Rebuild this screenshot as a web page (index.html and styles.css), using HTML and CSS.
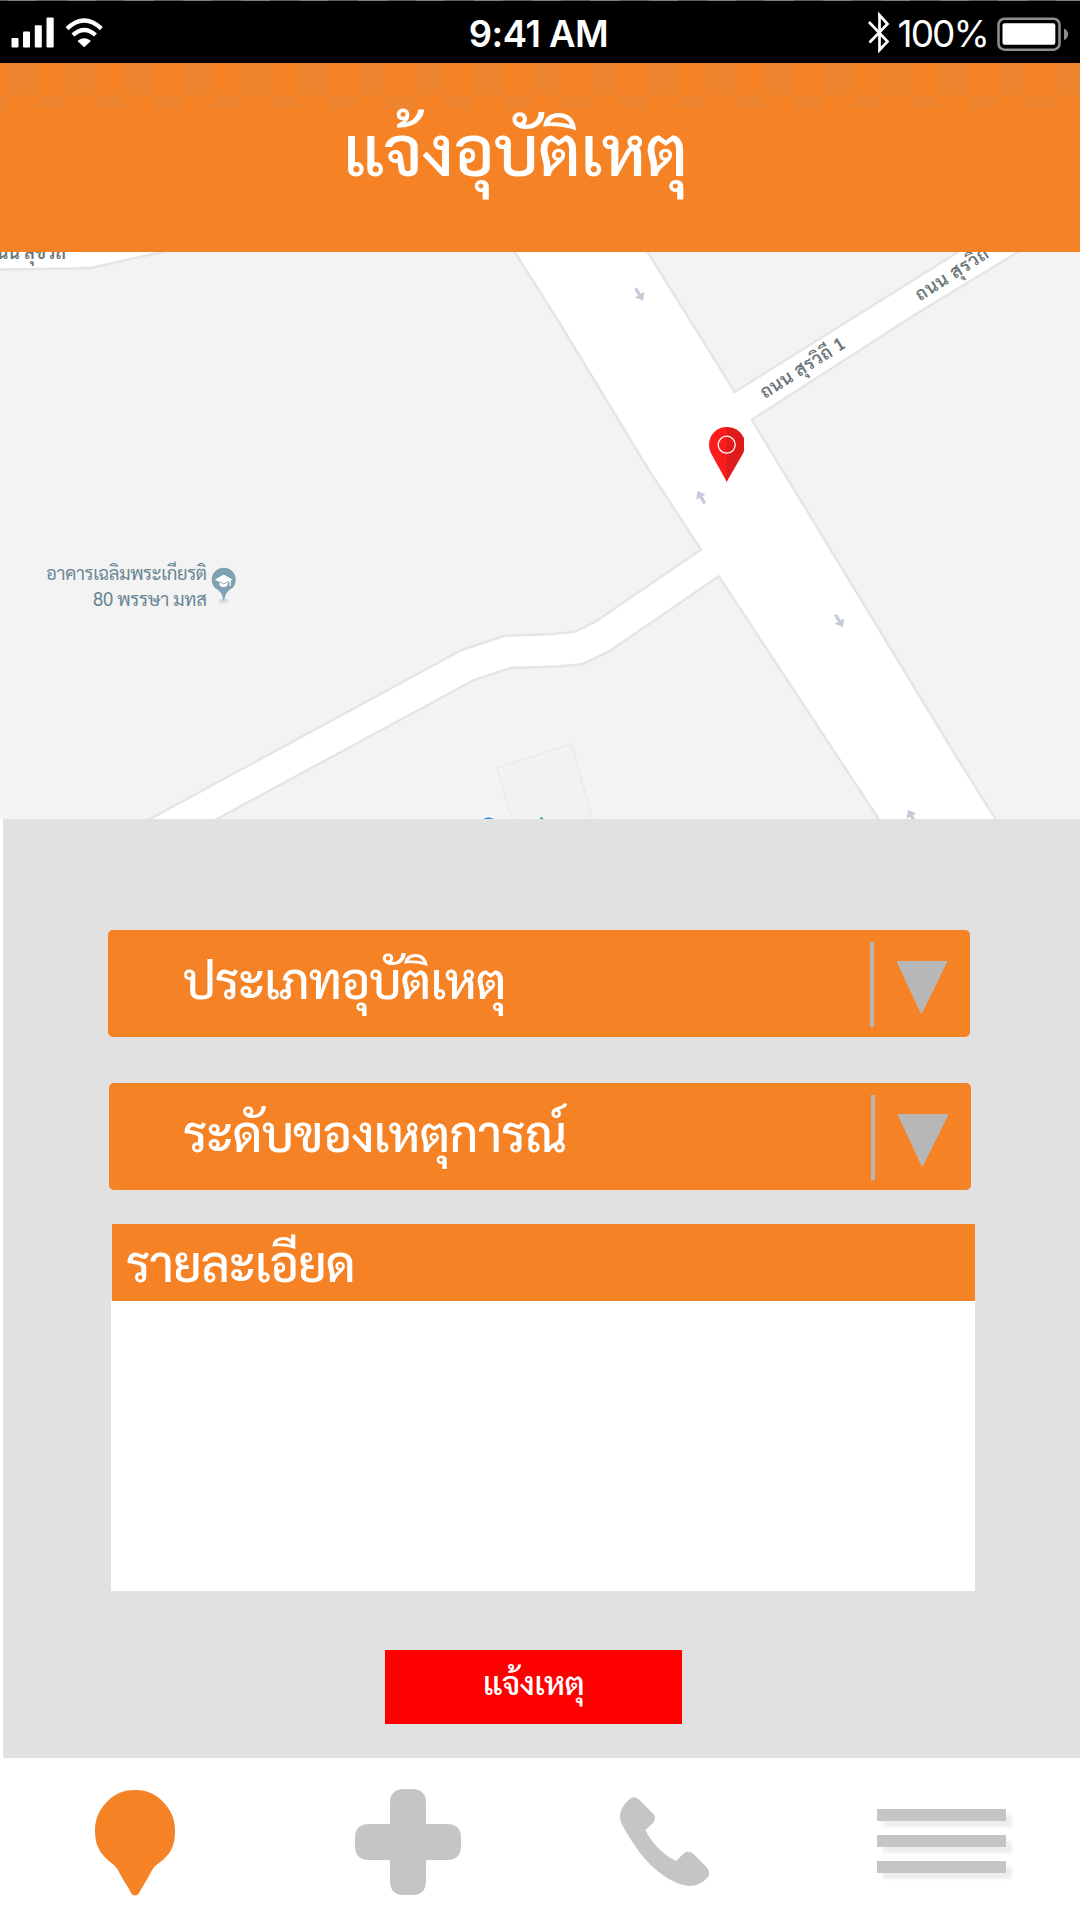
FILE: index.html
```html
<!DOCTYPE html>
<html lang="th">
<head>
<meta charset="utf-8">
<title>แจ้งอุบัติเหตุ</title>
<link rel="stylesheet" href="styles.css">
</head>
<body>
<div class="screen">
  <div class="status">
    <svg class="signal" viewBox="0 0 96 32" width="96" height="32">
      <g fill="#fff">
        <rect x="0.5" y="21" width="7" height="9.5" rx="1"/>
        <rect x="12" y="14.5" width="7" height="16" rx="1"/>
        <rect x="23.8" y="8.3" width="7" height="22.2" rx="1"/>
        <rect x="35.5" y="0.5" width="7.2" height="30" rx="1"/>
        <path d="M73.2 30.2 L67 24.4 Q66.700 23.800 67.300 23.300 Q73.200 19 79.100 23.300 Q79.700 23.800 79.400 24.400 Z"/>
      </g>
      <g fill="none" stroke="#fff" stroke-width="4.300">
        <path d="M56 11.600 Q73.200 -4.600 90.400 11.600"/>
        <path d="M61.900 18 Q73.200 7.800 84.500 18"/>
      </g>
    </svg>
    <span class="clock">9:41 AM</span>
    <div class="power">
      <svg class="bluetooth" viewBox="0 0 22 44" width="22" height="44">
        <path d="M1 11 L19.500 30.500 L11.500 39 V4 L19.500 13 L1.500 31.500" fill="none" stroke="#fff" stroke-width="2.700"/>
      </svg>
      <span class="percent">100%</span>
      <svg class="battery" viewBox="0 0 73 34" width="73" height="34">
        <rect x="2.500" y="1.700" width="61" height="31" rx="6" fill="none" stroke="#8e8e8e" stroke-width="2.600"/>
        <rect x="6.500" y="6.300" width="52.800" height="21.500" rx="2" fill="#fff"/>
        <path d="M68 11.500 Q72 13 72 17.200 Q72 21.500 68 23 Z" fill="#8e8e8e"/>
      </svg>
    </div>
  </div>

  <header class="header"><h1 class="title">แจ้งอุบัติเหตุ</h1></header>

  <svg class="map" viewBox="0 252 1080 567" width="1080" height="567">
    <rect x="0" y="252" width="1080" height="567" fill="#f3f3f3"/>
    <g fill="#fff" stroke="#e5e5e5" stroke-width="2.400" stroke-linejoin="round">
      <path d="M-5 240 V269.500 L75 268.500 L93 267.500 L162 252 L200 243 Z"/>
      <path d="M508 241 L514.500 251.500 L562 327 L648.500 469.300 L701 549.600 L595 622 L574 632 L553 634 L505 635.800 L461.600 650 L150 819 L130 830 H197 L217 819 L474 680 L510.600 668 L556.500 666.500 L582 664.300 L609.300 651.300 L718.800 576.200 L878.700 819 L886 830 H1002 L995.400 819 L952.600 750.500 L751.700 419.800 L916 314 L1018.800 251.500 L1036 241 H976 L959 251.500 L734.800 392 L647.200 251.500 L641 241 Z"/>
    </g>
    <path d="M497 768 L571.500 744 L592.500 819 L596 830 H516 L512 819 Z" fill="#f0f2f4" stroke="#e6e8ea" stroke-width="1.200"/>
    <circle cx="488.500" cy="826" r="10.500" fill="#fff"/>
    <circle cx="488.500" cy="826" r="8.800" fill="#4285f4"/>
    <circle cx="541.500" cy="819" r="1.800" fill="#34a853"/>
    <g fill="#c5c9dc">
      <path d="M-1.600 -7.500 H1.600 V0 H5.500 L0 7 L-5.500 0 H-1.600 Z" transform="translate(639.500 294.700) rotate(-31)"/>
      <path d="M-1.600 -7.500 H1.600 V0 H5.500 L0 7 L-5.500 0 H-1.600 Z" transform="translate(839.300 621) rotate(-31)"/>
      <path d="M-1.600 -7.500 H1.600 V0 H5.500 L0 7 L-5.500 0 H-1.600 Z" transform="translate(701 497) rotate(149)"/>
      <path d="M-1.600 -7.500 H1.600 V0 H5.500 L0 7 L-5.500 0 H-1.600 Z" transform="translate(911.500 816) rotate(149)"/>
    </g>
    <g class="road">
      <text transform="translate(765 399) rotate(-32.500)" textLength="97">ถนน สุรวิถี 1</text>
      <text transform="translate(920 301.500) rotate(-32.500)" textLength="99">ถนน สุรวิถี 1</text>
      <text x="-14" y="258.500" textLength="80">ถนน สุขวิถี</text>
    </g>
    <g class="place" text-anchor="end">
      <text x="207" y="579.500" textLength="161">อาคารเฉลิมพระเกียรติ</text>
      <text x="207" y="605.500" textLength="114">80 พรรษา มทส</text>
    </g>
    <ellipse cx="223.500" cy="601" rx="5" ry="2.500" fill="#dcdcdc"/>
    <path d="M223.700 601 L222.300 596 Q221 591.500 214.500 587.500 A12 12 0 1 1 233 587.500 Q226.500 591.500 225.200 596 Z" fill="#7ea1b3"/>
    <path d="M215 579.500 L223.700 574.500 L232.300 579.500 L230.800 580.500 V586 H229.600 V582 L227.500 583.200 V585.500 Q223.700 589 219.500 585.500 V582.300 Z" fill="#fff"/>
    <path d="M219.500 581.800 L223.700 583.800 L229 581.300" fill="none" stroke="#7ea1b3" stroke-width="0.900"/>
    <g>
      <path d="M726.700 481.700 L710.800 453 Q709 449 709 444.500 A17.700 17.700 0 0 1 726.700 427 H728 V479 Z" fill="#fb1d1e"/>
      <path d="M726.700 481.700 L743 453.500 L744 451 V438 A17.700 17.700 0 0 0 726.700 427 Z" fill="#e01b1c"/>
      <circle cx="726.700" cy="444.700" r="8.500" fill="none" stroke="#fff" stroke-width="1.300"/>
    </g>
  </svg>

  <main class="panel">
    <div class="select">
      <span class="label label-type">ประเภทอุบัติเหตุ</span>
      <span class="rule"></span>
      <svg viewBox="0 0 50 52" width="50" height="52"><path d="M0 0 H50 V1.500 L25 52 H23.500 L0 1.500 Z" fill="#b7b7b7"/></svg>
    </div>
    <div class="select second">
      <span class="label label-level">ระดับของเหตุการณ์</span>
      <span class="rule"></span>
      <svg viewBox="0 0 50 52" width="50" height="52"><path d="M0 0 H50 V1.500 L25 52 H23.500 L0 1.500 Z" fill="#b7b7b7"/></svg>
    </div>
    <section class="detail">
      <h2 class="detail-head"><span class="label label-detail">รายละเอียด</span></h2>
      <div class="detail-body"></div>
    </section>
    <button class="submit"><span class="submit-text">แจ้งเหตุ</span></button>
  </main>

  <nav class="nav">
    <svg viewBox="0 0 80 106" width="80" height="106"><path d="M40 0 C53 0 62 4.500 70 14 C77 22 80 30 80 41 C80 56 76 64 64 73 Q58.500 76.500 56 82 Q52 90 46.500 98.500 L44 103 Q42.500 105.500 40 105.500 Q37.500 105.500 36 103 L33.500 98 Q28 90 24 82 Q21 76 17 73.500 C5 64 0 56 0 41 C0 30 3 22 10 14 C18 4.500 27 0 40 0 Z" fill="#f58225"/></svg>
    <svg viewBox="0 0 106 106" width="106" height="106">
      <path d="M49 0 H57 Q71 0 71 14 V35 H92 Q106 35 106 49 V57 Q106 71 92 71 H71 V92 Q71 106 57 106 H49 Q35 106 35 92 V71 H14 Q0 71 0 57 V49 Q0 35 14 35 H35 V14 Q35 0 49 0 Z" fill="#c5c5c5"/>
      <path d="M53 40.500 C58 36 70 37 71 49 C71 57 62 65 55 70 Q53 71.500 51 70 C44 65 35 57 35 49 C36 37 48 36 53 40.500 Z" fill="none" stroke="#c9c9c9" stroke-width="1"/>
    </svg>
    <svg class="phone" viewBox="0 0 90 90" width="90" height="90"><path d="M8.500 3 Q14 -2.500 19.500 3 L33 16.500 Q37 21 33 26 L25.500 33 C31 45 42 57 56 64 L63 57 Q68 52.500 73.500 57 L87 70.500 Q91.500 76 87 81 C75 94 61 88.500 49 82 C31 72 17 53 8 38 C2 28 0 24 0 20 C0 14 2.500 9 8.500 3 Z" fill="#c5c5c5"/></svg>
    <div class="menu"><i></i><i></i><i></i></div>
  </nav>
</div>
</body>
</html>
```
FILE: styles.css
```css
* { box-sizing: border-box; }
body { margin: 0; background: #fff; font-family: Sarabun, Loma, "Liberation Sans", sans-serif; }
svg { display: block; flex: none; }
.screen { width: 1080px; height: 1920px; overflow: hidden; display: flex; flex-direction: column; background: #fff; }

.status {
  height: 63px; flex: none; padding: 0 11px; color: #fff;
  display: grid; grid-template-columns: 1fr auto 1fr; align-items: center;
  font-family: Inter, sans-serif; font-size: 37px; line-height: 64px;
  background: repeating-linear-gradient(90deg, #5f5f5f 0 8.3px, #808080 8.3px 37.4px, #5f5f5f 37.4px 58.2px) top / 100% 1px no-repeat, #000;
}
.clock { font-size: 36.5px; font-weight: 600; letter-spacing: -0.5px; white-space: nowrap; margin: 2px 3px 0 0; }
.power { display: flex; align-items: center; justify-content: flex-end; }
.percent { margin: 2px 8px 0 8px; letter-spacing: -1.9px; }
.battery { margin-top: 2px; }

.header {
  height: 189px; flex: none; display: flex; justify-content: center; padding-right: 50px; color: #fff;
  background:
    linear-gradient(90deg, transparent 0 8.3px, #ef852e 8.3px 37.4px, transparent 37.4px) 0 0 / 58.2px 32px repeat-x,
    linear-gradient(90deg, #ef852e 0 8.3px, transparent 8.3px 37.4px, #ef852e 37.4px) 0 32px / 58.2px 14px repeat-x,
    #f58225;
}
.title { margin: 0; font-size: 70px; font-weight: 500; letter-spacing: -0.9px; line-height: 168px; white-space: nowrap; }

.map { overflow: hidden; }
.road { font-size: 18px; font-weight: 600; fill: #6b7578; }
.place { font-size: 18.5px; fill: #6b8794; }

.panel { height: 939px; flex: none; margin-left: 3px; padding: 111px 0 0 105px; background: #e1e1e1; }
.select { width: 862px; height: 107px; display: flex; align-items: center; padding: 0 23px 0 75px; border-radius: 5px; background: #f58225; }
.select.second { margin: 46px 0 34px 1px; padding-left: 74px; }
.select svg { margin-top: 7px; }
.label { flex: 1; color: #fff; font-size: 50px; font-weight: 500; white-space: nowrap; line-height: 77px; padding-bottom: 10px; letter-spacing: -1.1px; }
.label-level { letter-spacing: -0.9px; }
.label-detail { padding: 0; line-height: 76px; }
.rule { width: 4px; height: 85px; margin: 2px 23px 0 0; background: #b7b7b7; }
.detail { width: 864px; margin-left: 3px; }
.detail-head { height: 77px; margin: 0 0 0 1px; padding-left: 14px; display: flex; background: #f58225; }
.detail-body { height: 290px; background: #fff; }
.submit { display: flex; align-items: center; justify-content: center; width: 297px; height: 74px; margin: 59px 0 0 277px; padding: 0 0 11px; border: 0; background: #f00; color: #fff; font: inherit; font-size: 33px; font-weight: 500; letter-spacing: -0.6px; }

.nav { flex: 1; display: grid; grid-template-columns: 260px 265px 257px 129px; align-items: start; padding: 32px 0 0 95px; }
.nav svg:nth-child(2) { margin-top: -1px; }
.phone { margin-top: 7px; }
.menu { margin-top: 19px; display: grid; gap: 14px; }
.menu i { height: 12px; background: #c5c5c5; box-shadow: 6px 6px 3px #eee; }
```
